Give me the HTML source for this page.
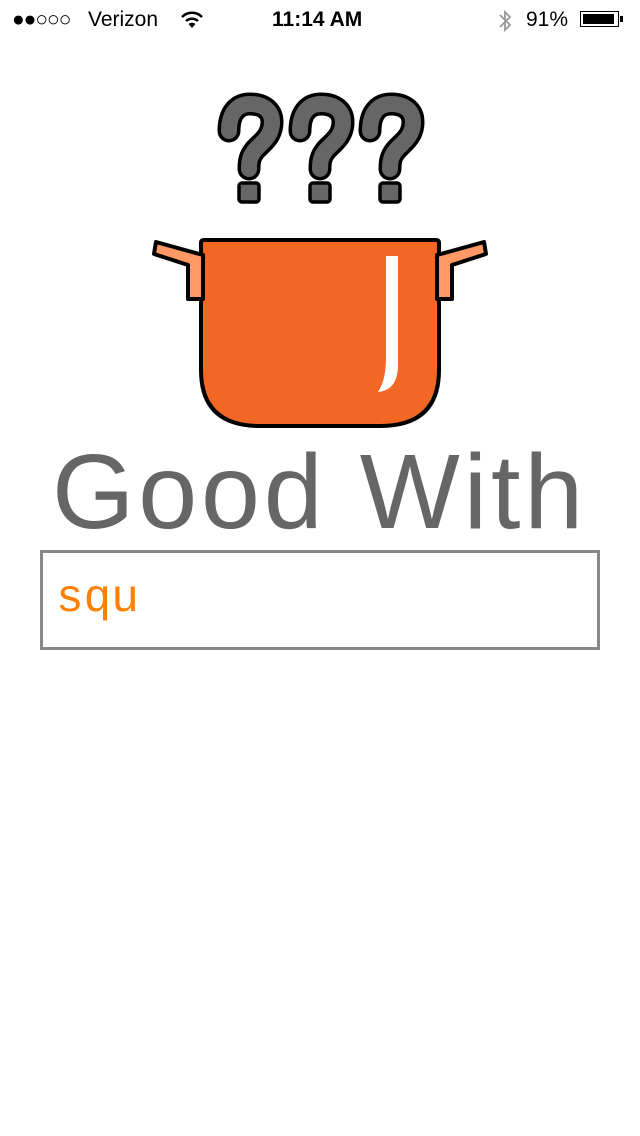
<!DOCTYPE html>
<html><head><meta charset="utf-8"><style>
body{margin:0;width:640px;height:1136px;background:#fff;position:relative;overflow:hidden;font-family:"Liberation Sans",sans-serif}
.sb{position:absolute;top:0;left:0;width:640px;height:40px;font-size:21px;color:#000}
.sb span{position:absolute;top:8px}
</style></head><body>
<div class="sb">
<span style="left:12px;letter-spacing:-1px">●●○○○</span>
<span style="left:88px">Verizon</span>
<svg style="position:absolute;left:180px;top:10px" width="24" height="20" viewBox="0 0 24 20"><path d="M2 7 A14 14 0 0 1 22 7" stroke="#000" stroke-width="2.5" fill="none"/><path d="M6 11 A9 9 0 0 1 18 11" stroke="#000" stroke-width="2.5" fill="none"/><path d="M12 18 L8.5 14 A5 5 0 0 1 15.5 14 Z" fill="#000"/></svg>
<span style="left:272px;font-weight:bold">11:14 AM</span>
<svg style="position:absolute;left:497px;top:9px" width="16" height="24" viewBox="0 0 16 24"><path d="M3 6 L13 16 L8 21 L8 3 L13 8 L3 18" stroke="#999" stroke-width="1.8" fill="none"/></svg>
<span style="left:526px">91%</span>
<div style="position:absolute;left:580px;top:11px;width:39px;height:16px;border:1.5px solid #000;box-sizing:border-box;padding:2px"><div style="width:31px;height:100%;background:#000"></div></div>
<div style="position:absolute;left:620px;top:16px;width:3px;height:6px;background:#000"></div>
</div>
<svg style="position:absolute;left:0;top:0" width="640" height="440" viewBox="0 0 640 440">
<defs>
<g id="q">
<path d="M229 131 C229 111 239 104 250 104 C265 104 272 112 272 122 C272 137 261 143 255 150 C250 156 249 161 249 169" fill="none" stroke="#000" stroke-width="23" stroke-linecap="round" stroke-linejoin="round"/>
<path d="M229 131 C229 111 239 104 250 104 C265 104 272 112 272 122 C272 137 261 143 255 150 C250 156 249 161 249 169" fill="none" stroke="#666" stroke-width="16" stroke-linecap="round" stroke-linejoin="round"/>
<rect x="239" y="183" width="20" height="19" rx="3" fill="#666" stroke="#000" stroke-width="3.5"/>
</g>
</defs>
<use href="#q"/><use href="#q" x="71"/><use href="#q" x="141"/>
<path d="M201 243 Q201 240 204 240 L436 240 Q439 240 439 243 L439 370 Q439 426 380 426 L260 426 Q201 426 201 370 Z" fill="#F26724" stroke="#000" stroke-width="4"/>
<g stroke="#000" stroke-width="4" stroke-linejoin="round" fill="#FF9966">
<path d="M156 242 L203 255 L203 299 L188 299 L188 265 L154 254 Z"/>
<path d="M484 242 L437 255 L437 299 L452 299 L452 265 L486 254 Z"/>
</g>
<path d="M386 256 L398 256 L398 365 Q398 390 378 392 Q386 380 386 358 Z" fill="#fff"/>
</svg>
<div style="position:absolute;left:52px;top:432px;font-size:106px;letter-spacing:3.8px;color:#666;line-height:120px;white-space:nowrap">Good With</div>
<div style="position:absolute;left:40px;top:550px;width:560px;height:100px;border:3px solid #888;box-sizing:border-box"></div>
<div style="position:absolute;left:56px;top:574px;font-family:'Liberation Mono',monospace;font-size:46px;color:#FF8000;line-height:50px">squ</div>
</body></html>
